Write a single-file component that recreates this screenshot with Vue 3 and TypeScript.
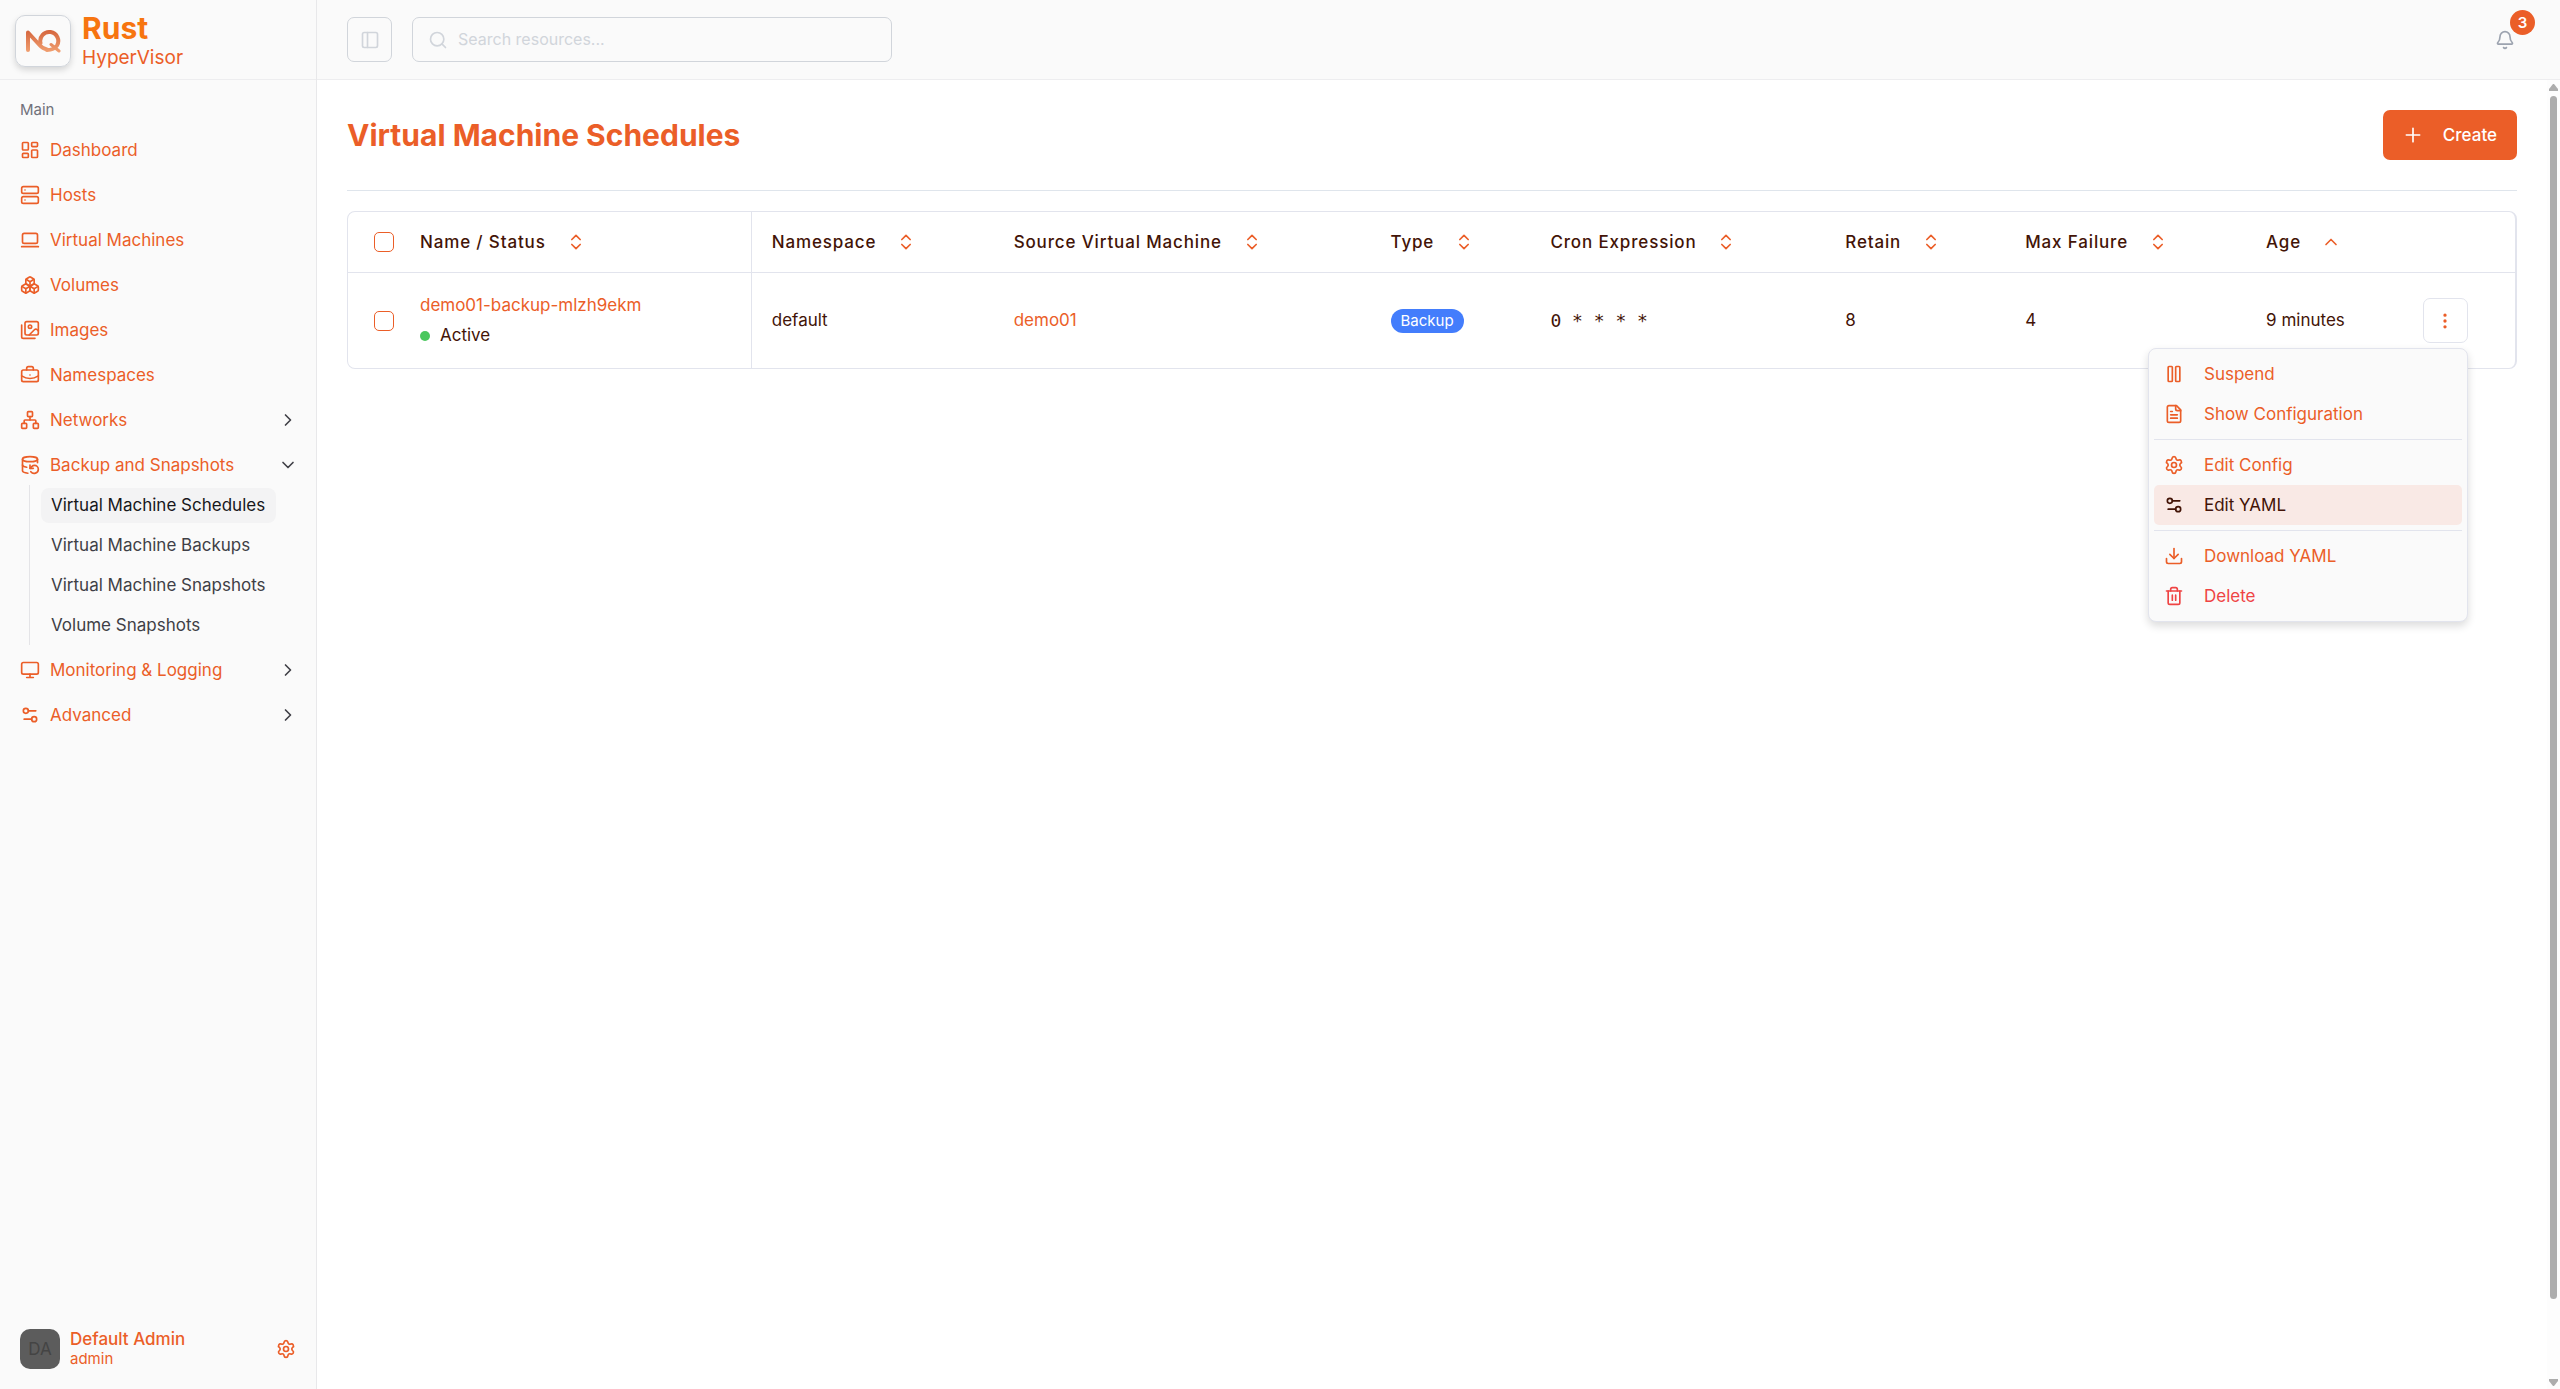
<script setup lang="ts">
import { ref } from 'vue'

const icons: Record<string, string> = {
  dashboard:
    '<rect width="7" height="9" x="3" y="3" rx="1"/><rect width="7" height="5" x="14" y="3" rx="1"/><rect width="7" height="9" x="14" y="12" rx="1"/><rect width="7" height="5" x="3" y="16" rx="1"/>',
  server:
    '<rect width="20" height="8" x="2" y="2" rx="2"/><rect width="20" height="8" x="2" y="14" rx="2"/><path d="M6 6h.01M6 18h.01"/>',
  laptop: '<rect width="18" height="12" x="3" y="4" rx="2"/><path d="M2 20h20"/>',
  boxes:
    '<path d="M2.97 12.92A2 2 0 0 0 2 14.63v3.24a2 2 0 0 0 .97 1.71l3 1.8a2 2 0 0 0 2.06 0L12 19v-5.5l-5-3-4.03 2.42Z"/><path d="m7 16.5-4.74-2.85M7 16.5l5-3M7 16.5v5.17"/><path d="M12 13.5V19l3.97 2.38a2 2 0 0 0 2.06 0l3-1.8a2 2 0 0 0 .97-1.71v-3.24a2 2 0 0 0-.97-1.71L17 10.5l-5 3Z"/><path d="m17 16.5-5-3M17 16.5l4.74-2.85M17 16.5v5.17"/><path d="M7.97 4.42A2 2 0 0 0 7 6.13v4.37l5 3 5-3V6.13a2 2 0 0 0-.97-1.71l-3-1.8a2 2 0 0 0-2.06 0l-3 1.8Z"/><path d="M12 8 7.26 5.15M12 8l4.74-2.85M12 13.5V8"/>',
  images:
    '<path d="M18 22H4a2 2 0 0 1-2-2V6"/><path d="m22 13-1.296-1.296a2.41 2.41 0 0 0-3.408 0L11 18"/><circle cx="12" cy="8" r="2"/><rect width="16" height="16" x="6" y="2" rx="2"/>',
  briefcase:
    '<path d="M12 12h.01"/><path d="M16 6V4a2 2 0 0 0-2-2h-4a2 2 0 0 0-2 2v2"/><path d="M22 13a18.15 18.15 0 0 1-20 0"/><rect width="20" height="14" x="2" y="6" rx="2"/>',
  network:
    '<rect width="6" height="6" x="16" y="16" rx="1"/><rect width="6" height="6" x="2" y="16" rx="1"/><rect width="6" height="6" x="9" y="2" rx="1"/><path d="M5 16v-3a1 1 0 0 1 1-1h12a1 1 0 0 1 1 1v3"/><path d="M12 12V8"/>',
  backup:
    '<ellipse cx="12" cy="5" rx="9" ry="3"/><path d="M3 12a9 3 0 0 0 5 2.69"/><path d="M21 9.3V5"/><path d="M3 5v14a9 3 0 0 0 6.47 2.88"/><path d="M12 12v4h4"/><path d="M13 20a5 5 0 0 0 9-3 4.5 4.5 0 0 0-4.5-4.5c-1.33 0-2.54.54-3.41 1.41L12 16"/>',
  monitor: '<rect width="20" height="14" x="2" y="3" rx="2"/><path d="M8 21h8M12 17v4"/>',
  sliders: '<path d="M14 17H5M19 7h-9"/><circle cx="17" cy="17" r="3"/><circle cx="7" cy="7" r="3"/>',
  gear:
    '<path d="M9.671 4.136a2.34 2.34 0 0 1 4.659 0 2.34 2.34 0 0 0 3.319 1.915 2.34 2.34 0 0 1 2.33 4.033 2.34 2.34 0 0 0 0 3.831 2.34 2.34 0 0 1-2.33 4.033 2.34 2.34 0 0 0-3.319 1.915 2.34 2.34 0 0 1-4.659 0 2.34 2.34 0 0 0-3.32-1.915 2.34 2.34 0 0 1-2.33-4.033 2.34 2.34 0 0 0 0-3.831A2.34 2.34 0 0 1 6.35 6.051a2.34 2.34 0 0 0 3.319-1.915"/><circle cx="12" cy="12" r="3"/>',
  right: '<path d="m9 18 6-6-6-6"/>',
  down: '<path d="m6 9 6 6 6-6"/>',
  up: '<path d="m18 15-6-6-6 6"/>',
  sort: '<path d="m7 15 5 5 5-5M7 9l5-5 5 5"/>',
  panel: '<rect width="18" height="18" x="3" y="3" rx="2"/><path d="M9 3v18"/>',
  search: '<circle cx="11" cy="11" r="8"/><path d="m21 21-4.3-4.3"/>',
  bell:
    '<path d="M10.268 21a2 2 0 0 0 3.464 0"/><path d="M3.262 15.326A1 1 0 0 0 4 17h16a1 1 0 0 0 .74-1.673C19.41 13.956 18 12.499 18 8A6 6 0 0 0 6 8c0 4.499-1.411 5.956-2.738 7.326"/>',
  plus: '<path d="M4 12h16M12 4v16"/>',
  dots: '<circle cx="12" cy="12" r="1"/><circle cx="12" cy="5" r="1"/><circle cx="12" cy="19" r="1"/>',
  pause: '<rect width="5" height="18" x="14" y="3" rx="1"/><rect width="5" height="18" x="5" y="3" rx="1"/>',
  file:
    '<path d="M15 2H6a2 2 0 0 0-2 2v16a2 2 0 0 0 2 2h12a2 2 0 0 0 2-2V7Z"/><path d="M14 2v4a2 2 0 0 0 2 2h4M10 9H8M16 13H8M16 17H8"/>',
  download: '<path d="M12 15V3"/><path d="M21 15v4a2 2 0 0 1-2 2H5a2 2 0 0 1-2-2v-4"/><path d="m7 10 5 5 5-5"/>',
  trash:
    '<path d="M10 11v6M14 11v6"/><path d="M19 6v14a2 2 0 0 1-2 2H7a2 2 0 0 1-2-2V6"/><path d="M3 6h18"/><path d="M8 6V4a2 2 0 0 1 2-2h4a2 2 0 0 1 2 2v2"/>',
}

interface NavItem {
  label: string
  icon: string
  group?: boolean
  children?: string[]
}

const nav: NavItem[] = [
  { label: 'Dashboard', icon: 'dashboard' },
  { label: 'Hosts', icon: 'server' },
  { label: 'Virtual Machines', icon: 'laptop' },
  { label: 'Volumes', icon: 'boxes' },
  { label: 'Images', icon: 'images' },
  { label: 'Namespaces', icon: 'briefcase' },
  { label: 'Networks', icon: 'network', group: true },
  {
    label: 'Backup and Snapshots',
    icon: 'backup',
    group: true,
    children: [
      'Virtual Machine Schedules',
      'Virtual Machine Backups',
      'Virtual Machine Snapshots',
      'Volume Snapshots',
    ],
  },
  { label: 'Monitoring & Logging', icon: 'monitor', group: true },
  { label: 'Advanced', icon: 'sliders', group: true },
]
const current = 'Virtual Machine Schedules'

// Column widths are shares of the table's full width.
const columns = [
  { label: 'Name / Status', share: 352, icon: 'sort' },
  { label: 'Namespace', share: 242, icon: 'sort' },
  { label: 'Source Virtual Machine', share: 377, icon: 'sort' },
  { label: 'Type', share: 160, icon: 'sort' },
  { label: 'Cron Expression', share: 295, icon: 'sort' },
  { label: 'Retain', share: 180, icon: 'sort' },
  { label: 'Max Failure', share: 241, icon: 'sort' },
  { label: 'Age', share: 157, icon: 'up' },
]
const selectShare = 52
const actionShare = 112
const total = selectShare + actionShare + columns.reduce((sum, c) => sum + c.share, 0)
const width = (share: number) => ({ width: `${(share / total) * 100}%` })

const menu = [
  [
    { label: 'Suspend', icon: 'pause' },
    { label: 'Show Configuration', icon: 'file' },
  ],
  [
    { label: 'Edit Config', icon: 'gear' },
    { label: 'Edit YAML', icon: 'sliders' },
  ],
  [
    { label: 'Download YAML', icon: 'download' },
    { label: 'Delete', icon: 'trash' },
  ],
]
const highlighted = ref('Edit YAML')
const menuOpen = ref(true)
const query = ref('')
</script>

<template>
  <div class="shell">
    <aside class="sidebar">
      <div class="brand">
        <div class="logo">
          <svg viewBox="0 0 36 24" width="36" height="24" fill="none" stroke-linecap="round" stroke-linejoin="round" aria-hidden="true">
            <defs>
              <linearGradient id="logo-fill" x1="0" y1="0" x2="0" y2="24" gradientUnits="userSpaceOnUse">
                <stop offset="0" stop-color="#d3623a" />
                <stop offset="1" stop-color="#f2a273" />
              </linearGradient>
            </defs>
            <g stroke="url(#logo-fill)">
              <path stroke-width="4" d="M3 21V3.5L14.5 16Q18 20 22 20.5" />
              <path stroke-width="4" d="M15.5 14A9 9 0 1 1 32 16.500Q29 21 22 21" />
              <path stroke-width="3" d="M26 15.5L34 22" />
            </g>
          </svg>
        </div>
        <div class="brand-text">
          <strong>Rust</strong>
          <span>HyperVisor</span>
        </div>
      </div>

      <nav class="nav" aria-label="Main">
        <p class="nav-label">Main</p>
        <template v-for="item in nav" :key="item.label">
          <component :is="item.group ? 'button' : 'a'" class="nav-item" :href="item.group ? undefined : '#'">
            <svg class="icon" viewBox="0 0 24 24" v-html="icons[item.icon]" />
            <span>{{ item.label }}</span>
            <svg v-if="item.group" class="icon chevron" viewBox="0 0 24 24" v-html="icons[item.children ? 'down' : 'right']" />
          </component>
          <div v-if="item.children" class="subnav">
            <a v-for="child in item.children" :key="child" href="#" :class="{ active: child === current }">{{ child }}</a>
          </div>
        </template>
      </nav>

      <div class="user">
        <div class="avatar">DA</div>
        <div class="user-text">
          <strong>Default Admin</strong>
          <span>admin</span>
        </div>
        <button class="bare" aria-label="Settings">
          <svg class="icon" viewBox="0 0 24 24" v-html="icons.gear" />
        </button>
      </div>
    </aside>

    <div class="page">
      <header class="topbar">
        <button class="toggle" aria-label="Toggle sidebar">
          <svg class="icon" viewBox="0 0 24 24" v-html="icons.panel" />
        </button>
        <label class="search">
          <svg class="icon" viewBox="0 0 24 24" v-html="icons.search" />
          <input v-model="query" type="text" placeholder="Search resources..." aria-label="Search resources" />
        </label>
        <button class="bell" aria-label="Notifications">
          <svg class="icon" viewBox="0 0 24 24" v-html="icons.bell" />
          <span class="count">3</span>
        </button>
      </header>

      <div class="body">
        <main class="content">
          <div class="heading">
            <h1>Virtual Machine Schedules</h1>
            <button class="create">
              <svg class="icon" viewBox="0 0 24 24" v-html="icons.plus" />
              <span>Create</span>
            </button>
          </div>

          <div class="table-card">
            <table>
              <colgroup>
                <col :style="width(selectShare)" />
                <col v-for="column in columns" :key="column.label" :style="width(column.share)" />
                <col :style="width(actionShare)" />
              </colgroup>
              <thead>
                <tr>
                  <th class="select"><input type="checkbox" aria-label="Select all" /></th>
                  <th v-for="column in columns" :key="column.label">
                    <button class="sort">
                      <span>{{ column.label }}</span>
                      <svg class="icon" viewBox="0 0 24 24" v-html="icons[column.icon]" />
                    </button>
                  </th>
                  <th></th>
                </tr>
              </thead>
              <tbody>
                <tr>
                  <td class="select"><input type="checkbox" aria-label="Select demo01-backup-mlzh9ekm" /></td>
                  <td>
                    <a href="#">demo01-backup-mlzh9ekm</a>
                    <div class="status"><i></i>Active</div>
                  </td>
                  <td>default</td>
                  <td><a href="#">demo01</a></td>
                  <td><span class="pill">Backup</span></td>
                  <td class="mono">0 * * * *</td>
                  <td>8</td>
                  <td>4</td>
                  <td>9 minutes</td>
                  <td>
                    <div class="actions">
                      <button class="more" aria-label="Actions" @click="menuOpen = !menuOpen">
                        <svg class="icon" viewBox="0 0 24 24" v-html="icons.dots" />
                      </button>
                      <div v-if="menuOpen" class="menu" role="menu">
                        <div v-for="(group, index) in menu" :key="index" class="menu-group">
                          <button
                            v-for="entry in group"
                            :key="entry.label"
                            role="menuitem"
                            :class="{ on: entry.label === highlighted, danger: entry.icon === 'trash' }"
                            @mouseenter="highlighted = entry.label"
                          >
                            <svg class="icon" viewBox="0 0 24 24" v-html="icons[entry.icon]" />
                            <span>{{ entry.label }}</span>
                          </button>
                        </div>
                      </div>
                    </div>
                  </td>
                </tr>
              </tbody>
            </table>
          </div>
        </main>

        <div class="scrollbar" aria-hidden="true">
          <svg width="9" height="7" viewBox="0 0 9 7"><path d="M4 0h1l4 5v2H0V5Z" /></svg>
          <div class="track"><div class="thumb"></div></div>
          <svg width="9" height="7" viewBox="0 0 9 7"><path d="M4 7h1l4-5V0H0v2Z" /></svg>
        </div>
      </div>
    </div>
  </div>
</template>

<style>
body {
  background: #ffffff;
}
</style>

<style scoped>
* {
  box-sizing: border-box;
}

.shell {
  display: flex;
  min-height: 100vh;
  font-family: Inter, "Liberation Sans", sans-serif;
  font-size: 17px;
  line-height: 25px;
  color: #431407;
}

a {
  color: #eb5e28;
  text-decoration: none;
}

button {
  margin: 0;
  padding: 0;
  border: 0;
  background: none;
  font: inherit;
  color: inherit;
  text-align: left;
  cursor: pointer;
}

.icon {
  flex: none;
  display: block;
  width: 20px;
  height: 20px;
  fill: none;
  stroke: currentColor;
  stroke-width: 2;
  stroke-linecap: round;
  stroke-linejoin: round;
}

.sidebar {
  flex: none;
  display: flex;
  flex-direction: column;
  width: 317px;
  border-right: 1px solid #e8e8ea;
  background: #fafafa;
  color: #eb5e28;
}

.brand {
  display: flex;
  align-items: center;
  gap: 11px;
  height: 80px;
  padding: 2px 15px 0;
  border-bottom: 1px solid #ededef;
}

.logo {
  display: flex;
  align-items: center;
  justify-content: center;
  width: 56px;
  height: 52px;
  border: 1px solid #d1d5db;
  border-radius: 10px;
  box-shadow: 0 3px 6px rgba(0, 0, 0, 0.15);
}

.brand-text {
  display: flex;
  flex-direction: column;
}

.brand-text strong {
  font-size: 30px;
  line-height: 34px;
  font-weight: 700;
  color: #f77510;
}

.brand-text span {
  font-size: 19px;
  line-height: 25px;
}

.nav {
  flex: 1;
  display: flex;
  flex-direction: column;
  gap: 5px;
  padding: 10px;
}

.nav-label {
  margin: 0 0 -5px;
  padding: 0 10px;
  font-size: 15px;
  line-height: 40px;
  color: #71717a;
}

.nav-item {
  display: flex;
  align-items: center;
  gap: 10px;
  height: 40px;
  padding: 0 8px 0 10px;
  color: #eb5e28;
}

.chevron {
  margin-left: auto;
  color: #3f3f46;
}

.subnav {
  display: flex;
  flex-direction: column;
  gap: 5px;
  margin: -5px 0 0 19px;
  padding: 3px 0 2px 11px;
  border-left: 1px solid #e4e4e7;
}

.subnav a {
  align-self: flex-start;
  width: 235px;
  padding: 5px 10px;
  border-radius: 8px;
  color: #3f3f46;
  white-space: nowrap;
}

.subnav a.active {
  background: #f3f3f4;
  color: #18181b;
}

.user {
  display: flex;
  align-items: center;
  gap: 10px;
  padding: 20px;
}

.avatar {
  display: flex;
  align-items: center;
  justify-content: center;
  width: 40px;
  height: 40px;
  border-radius: 10px;
  background: #5c5c5c;
  color: #444444;
}

.user-text {
  flex: 1;
  display: flex;
  flex-direction: column;
}

.user-text strong {
  line-height: 20px;
  font-weight: 500;
}

.user-text span {
  font-size: 15px;
  line-height: 20px;
}

.page {
  flex: 1;
  min-width: 0;
  display: flex;
  flex-direction: column;
}

.topbar {
  display: flex;
  align-items: center;
  gap: 20px;
  height: 80px;
  padding: 0 45px 0 30px;
  border-bottom: 1px solid #ededef;
  background: #fafafa;
}

.toggle,
.search {
  display: flex;
  align-items: center;
  height: 45px;
  border: 1px solid #d1d5db;
  border-radius: 7px;
  color: #d1d5db;
}

.toggle {
  justify-content: center;
  width: 45px;
}

.search {
  gap: 10px;
  width: 480px;
  padding: 0 15px;
}

.search input {
  flex: 1;
  min-width: 0;
  padding: 0;
  border: 0;
  outline: 0;
  background: none;
  font: inherit;
  color: #431407;
}

.search input::placeholder {
  font-size: 16px;
  color: #d1d5db;
  opacity: 1;
}

.bell {
  position: relative;
  margin-left: auto;
  color: #9ca3af;
}

.count {
  position: absolute;
  top: -20px;
  left: 15px;
  width: 25px;
  height: 25px;
  border-radius: 50%;
  background: #eb5e28;
  font-size: 15px;
  font-weight: 600;
  text-align: center;
  color: #ffffff;
}

.body {
  flex: 1;
  display: flex;
}

.content {
  flex: 1;
  min-width: 0;
  padding: 30px 30px 0;
}

.heading {
  display: flex;
  align-items: center;
  justify-content: space-between;
  margin-bottom: 20px;
  padding-bottom: 30px;
  border-bottom: 1px solid #dfe5ec;
}

h1 {
  margin: 0;
  font-size: 30px;
  line-height: 40px;
  font-weight: 700;
  color: #eb5e28;
}

.create {
  display: flex;
  align-items: center;
  gap: 20px;
  height: 50px;
  padding: 0 20px;
  border-radius: 7px;
  background: #eb5e28;
  font-weight: 500;
  color: #ffffff;
}

.table-card {
  border: 1px solid #e2e4ed;
  border-right-width: 2px;
  border-radius: 8px;
}

table {
  width: 100%;
  table-layout: fixed;
  border-collapse: separate;
  border-spacing: 0;
}

th,
td {
  padding: 0 0 0 20px;
  text-align: left;
  vertical-align: middle;
  white-space: nowrap;
}

th {
  height: 61px;
  border-bottom: 1px solid #e2e4ed;
  font-weight: 500;
}

td {
  height: 95px;
}

th:nth-child(2),
td:nth-child(2) {
  border-right: 1px solid #e2e4ed;
}

.select {
  padding-left: 26px;
}

.select input {
  appearance: none;
  display: block;
  width: 20px;
  height: 20px;
  margin: 0;
  border: 1px solid #eb5e28;
  border-radius: 5px;
}

.select input:checked {
  background: #eb5e28;
}

.sort {
  display: flex;
  align-items: center;
  gap: 20px;
  letter-spacing: 0.05em;
}

.sort .icon {
  color: #eb5e28;
}

.status {
  display: flex;
  align-items: center;
  gap: 10px;
  margin-top: 5px;
}

.status i {
  width: 10px;
  height: 10px;
  border-radius: 50%;
  background: #4ac75d;
}

.pill {
  display: inline-block;
  padding: 0 10px;
  border-radius: 12px;
  background: #437dfc;
  font-size: 15px;
  line-height: 24px;
  color: #ffffff;
}

.mono {
  font-family: "DejaVu Sans Mono", monospace;
  font-size: 18px;
}

.actions {
  position: relative;
  width: 45px;
}

.more {
  display: flex;
  align-items: center;
  justify-content: center;
  width: 45px;
  height: 45px;
  border: 1px solid #e2e4ed;
  border-radius: 7px;
  color: #eb5e28;
}

.menu {
  position: absolute;
  z-index: 10;
  top: 50px;
  right: 0;
  width: 320px;
  padding: 5px;
  border: 1px solid #e2e4ed;
  border-radius: 8px;
  background: #fafafa;
  box-shadow: 0 4px 8px rgba(0, 0, 0, 0.14);
}

.menu-group + .menu-group {
  margin-top: 5px;
  padding-top: 5px;
  border-top: 1px solid #e2e4ed;
}

.menu button {
  display: flex;
  align-items: center;
  gap: 20px;
  width: 100%;
  height: 40px;
  padding: 0 10px;
  border-radius: 5px;
  color: #eb5e28;
}

.menu button.danger {
  color: #ef4444;
}

.menu button.on {
  background: #f9e9e5;
  color: #431407;
}

.scrollbar {
  flex: none;
  display: flex;
  flex-direction: column;
  align-items: center;
  gap: 5px;
  width: 13px;
  padding: 4px 0 3px;
  background: #fdfdfd;
}

.scrollbar svg {
  display: block;
  fill: #adadad;
}

.track {
  flex: 1;
  display: flex;
  flex-direction: column;
  width: 7px;
}

.track::after {
  content: "";
  flex: 1;
}

.thumb {
  flex: 16;
  border-radius: 4px;
  background: #adadad;
}
</style>
